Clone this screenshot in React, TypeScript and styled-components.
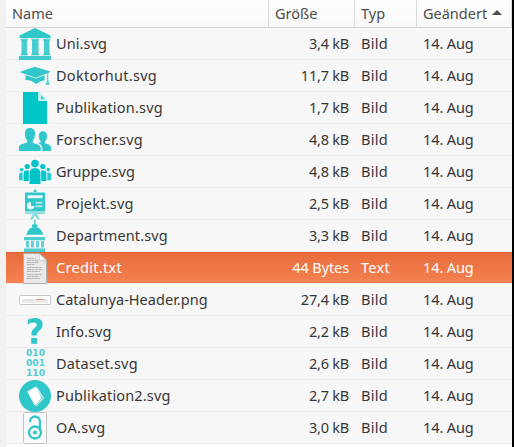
import React from "react";
import styled, { createGlobalStyle, css } from "styled-components";

const TEAL = "#2fc7c9";
const BRIGHT = "#00c5c8";

const GlobalStyle = createGlobalStyle`
  body {
    margin: 0;
    background: #000;
  }
`;

const columns = css`
  display: grid;
  grid-template-columns: 263px 86px 62px 95px;
`;

const Window = styled.div`
  box-sizing: border-box;
  width: 512px;
  height: 447px;
  overflow: hidden;
  padding-left: 6px;
  background: #f2f1f0;
  color: #3c3c3c;
  font: 14.5px/17px "Noto Sans", "Open Sans", sans-serif;
  white-space: nowrap;
`;

const Panel = styled.div`
  height: 100%;
  background: #fdfdfd;
`;

const Header = styled.div`
  ${columns}
  height: 28px;
  box-sizing: border-box;
  border-bottom: 1px solid #d5d5d5;
  background: linear-gradient(#ffffff, #f8f8f8);
  color: #4c4c4c;
`;

const HeaderCell = styled.div`
  display: flex;
  align-items: center;
  gap: 5px;
  box-sizing: border-box;
  padding: 0 0 1px 6px;
  border-right: 1px solid #dadada;
`;

const SortArrow = styled.svg`
  width: 10px;
  height: 5px;
  margin-top: -1px;
  fill: #4c4c4c;
`;

const Row = styled.div<{ $selected?: boolean }>`
  ${columns}
  height: 32px;
  box-sizing: border-box;
  border-bottom: 1px solid #ededed;
  background: ${(p) => (p.$selected ? "linear-gradient(#e86c3b, #f68151)" : "#f7f7f7")};
  box-shadow: ${(p) => (p.$selected ? "inset 0 1px #dc683b" : "none")};
  background-clip: padding-box;
  color: ${(p) => (p.$selected ? "#fff" : "#363636")};
`;

const Cell = styled.div<{ $end?: boolean }>`
  display: flex;
  align-items: center;
  justify-content: ${(p) => (p.$end ? "flex-end" : "flex-start")};
  height: 32px;
  padding: ${(p) => (p.$end ? "0 6px 0 0" : "0 0 0 6px")};
  box-sizing: border-box;
`;

const NameCell = styled(Cell)`
  padding-left: 13px;
  gap: 5px;
`;

const Label = styled.span<{ $track?: number }>`
  padding-bottom: 2px;
  letter-spacing: ${(p) => p.$track ?? 0}px;
`;

const Icon = styled.svg`
  display: block;
  flex: none;
  width: 32px;
  height: 32px;
`;

const Glyphs = styled.text`
  font-family: "DejaVu Sans", sans-serif;
  font-weight: bold;
  text-anchor: middle;
`;

const UniIcon = () => (
  <Icon viewBox="0 0 32 32" fill={TEAL}>
    <path d="M16 0 31.5 7.500V10H.5V7.500z" />
    <path d="M2.500 11.500h5.500V27H2.500zM13 11.500h6.500V27H13zM25 11.500h5.500V27H25z" opacity=".88" />
    <path d="M1.500 10.500h7.500v1.900H1.500zM12 10.500h8.500v1.900H12zM24 10.500h7.500v1.900H24zM1.500 25.500h7.500v1.900H1.500zM12 25.500h8.500v1.900H12zM24 25.500h7.500v1.900H24z" opacity=".6" />
    <path d="M0 28h32v4H0z" opacity=".9" />
  </Icon>
);

const HatIcon = () => (
  <Icon viewBox="0 0 32 32" fill={TEAL}>
    <path d="M15.800 6.800 32 11.800 16.800 17.700.5 12z" />
    <path d="M6.500 14.900 16.800 18.500 25.600 15.200v5c-3 .3-5.600 1.600-8.200 3.800-3-2.500-6.500-4.100-10.900-4.100z" />
    <path d="M29.300 12.500v7l1.300 5.500-4 .1 1.400-5.600v-6.400z" opacity=".75" />
  </Icon>
);

const DocIcon = () => (
  <Icon viewBox="0 0 32 32">
    <path d="M4 0h15.500v9H28v23H4z" fill={BRIGHT} />
    <path d="M19.500 0h2L28 7.500V9h-8.500z" fill="#d4f5f5" />
    <path d="M21.800 3v4.200h4.400z" fill="#37d0d2" />
  </Icon>
);

const ResearcherIcon = () => (
  <Icon viewBox="0 0 32 32" fill={TEAL}>
    <path d="M11 4c3.500 0 5.300 2.300 5.100 6-.1 3-1 5-2.300 6.400v2.300c3 1.300 7.800 1.800 8 5.300V27H0v-4c.2-3 5-3 8.200-4.400v-2.300C6.800 15 6 12.600 5.900 10 5.700 6.300 7.500 4 11 4z" />
    <path d="M23.800 7.200c3 0 4.400 2 4.200 5-.1 2.500-.8 4-1.900 5v2c2 .9 5.900 1.300 5.900 4.200V27h-8.700v-3c0-2.800-1.800-4-4.500-5.100l2.800-.6v-1.500c-1-1-1.700-2.400-1.800-4.600-.2-3 1.300-5 4-5z" />
  </Icon>
);

const GroupIcon = () => (
  <Icon viewBox="0 0 32 32" fill={BRIGHT}>
    <circle cx="16" cy="7.600" r="3.800" />
    <path d="M16 12.200c4 0 5.500 2 5.500 5.300V28h-11V17.500c0-3.300 1.500-5.300 5.500-5.300z" />
    <circle cx="8.200" cy="10.500" r="2.600" />
    <circle cx="23.800" cy="10.500" r="2.600" />
    <path d="M5 15.500c1.200-1.400 3-1.600 4.800-.8V25H4.600v-7.500zM27 15.500c-1.200-1.400-3-1.600-4.800-.8V25h5.200v-7.500z" />
    <circle cx="2.700" cy="13.600" r="1.900" opacity=".85" />
    <circle cx="29.300" cy="13.600" r="1.900" opacity=".85" />
    <path d="M0 18.200c.8-1.600 2-1.900 3.700-1.500v7.500H0zM32 18.200c-.8-1.600-2-1.900-3.700-1.500v7.500H32z" opacity=".85" />
  </Icon>
);

const ProjectIcon = () => (
  <Icon viewBox="0 0 32 32" fill={TEAL}>
    <path d="M14.300 4 16 .8 18 4z" />
    <path d="M6 4.500h20V23H6z" />
    <path d="M6 23h20v3H6z" opacity=".5" />
    <path d="m13.700 26-2.500 5.500h2.200L16 27.500l2.600 4h2.200L18.200 26z" opacity=".6" />
    <path d="M8.500 7.300h15v2.900h-15z" fill="#f0fbfb" />
    <path d="M12 14v4h3.500a3.800 3.800 0 1 1-3.500-4z" fill="#e8f9f9" />
    <path d="M16.500 13.800h7v2h-7zM16.500 17.300h7v2h-7z" fill="#a5e6e7" />
  </Icon>
);

const DomeIcon = () => (
  <Icon viewBox="0 0 32 32" fill={TEAL}>
    <path d="M14.800 0h2v5h-2z" opacity=".7" />
    <path d="M13 4.500h5.500V7H13z" />
    <path d="M7.300 14.800C8.500 9.500 12 7 15.800 7s7.200 2.500 8.300 7.800z" />
    <path d="M5 17h21v3.300H5zM5 28.400h21V32H5z" opacity=".85" />
    <path d="M7 21h3v6.500H7zM12 21h3v6.500h-3zM17 21h3v6.500h-3zM22 21h3v6.500h-3z" opacity=".75" />
  </Icon>
);

const TextFileIcon = () => (
  <Icon viewBox="0 0 32 32">
    <path d="M4.500 1.500h16L27.500 8v23.500h-23z" fill="#e9e9e8" stroke="#b2aeac" />
    <path d="M20.500 2v6h6z" fill="#fff" stroke="#cdcdcd" strokeWidth=".7" />
    <path d="M20.500 8h6v3z" fill="#d5d5d5" />
    <path
      d="M8 6.500h9M8 8.500h12M8 10.500h12M8 12.500h8M8 15.500h15M8 17.500h15M8 19.500h13M8 22.500h15M8 24.500h12M8 26.500h13"
      stroke="#b5b5b5"
      strokeDasharray="4 .5 2.500 .5"
    />
  </Icon>
);

const BannerIcon = () => (
  <Icon viewBox="0 0 32 32">
    <rect x=".5" y="11.500" width="31" height="9" rx="1" fill="#fff" stroke="#c4c4c4" />
    <path d="M3 15h26v4H3z" fill="#ebe9e8" />
    <path d="M8 15.500h7" stroke="#dcdcdc" />
    <path d="M17 15.500h6" stroke="#e39a78" />
    <path d="M23 15.500h3" stroke="#bbb" />
  </Icon>
);

const InfoIcon = () => (
  <Icon viewBox="0 0 32 32" fill={TEAL}>
    <path d="M8.800 3.800C11 2.500 13.500 2 16 2c4.800 0 7.600 2.500 7.600 6.600 0 3-1.600 4.800-3.800 6.700-1.800 1.600-2 2-2 4.200h-5.300c-.2-4 .7-5.300 2.800-7.200 1.700-1.500 2.400-2.200 2.400-3.500 0-1.500-1-2.300-2.800-2.300-2.100 0-4 .8-6.100 2.300z" />
    <path d="M12.200 22h5.800v5.800h-5.800z" />
  </Icon>
);

const DatasetIcon = () => (
  <Icon viewBox="0 0 32 32" fill="#50cfd1">
    <Glyphs x="16.500" y="8.300" fontSize="8.800" textLength="19" lengthAdjust="spacingAndGlyphs">010</Glyphs>
    <Glyphs x="16.500" y="17.800" fontSize="8.800" textLength="19" lengthAdjust="spacingAndGlyphs">001</Glyphs>
    <Glyphs x="16.500" y="27.500" fontSize="8.800" textLength="19" lengthAdjust="spacingAndGlyphs">110</Glyphs>
  </Icon>
);

const BookIcon = () => (
  <Icon viewBox="0 0 32 32">
    <circle cx="16" cy="16" r="16" fill={TEAL} />
    <path d="M18.500 8.500 25 18.500l-8 7.500" fill="none" stroke="#a5e6e7" />
    <path d="M18 7.500 23.500 18l-6 8" fill="none" stroke="#d5f4f4" />
    <path d="m8.200 11.500 8.800-5L22.500 18l-6.500 8z" fill="#fff" />
  </Icon>
);

const OpenAccessIcon = () => (
  <Icon viewBox="0 0 32 32" fill="none">
    <rect x="4.500" y=".5" width="23" height="31" rx="1" fill="#fcfcfc" stroke="#c2c2c2" />
    <path d="M11 10.200v-.7a5 5 0 0 1 10 0V19" stroke={TEAL} strokeWidth="2.300" />
    <circle cx="16" cy="20.500" r="6" stroke={TEAL} strokeWidth="2.300" />
    <circle cx="16" cy="20.500" r="2.100" fill={TEAL} />
  </Icon>
);

interface FileEntry {
  name: string;
  track: number;
  size: string;
  type: string;
  icon: React.FC;
  selected?: boolean;
}

const files: FileEntry[] = [
  { name: "Uni.svg", track: 0.1, size: "3,4 kB", type: "Bild", icon: UniIcon },
  { name: "Doktorhut.svg", track: 0.28, size: "11,7 kB", type: "Bild", icon: HatIcon },
  { name: "Publikation.svg", track: 0.2, size: "1,7 kB", type: "Bild", icon: DocIcon },
  { name: "Forscher.svg", track: 0.24, size: "4,8 kB", type: "Bild", icon: ResearcherIcon },
  { name: "Gruppe.svg", track: 0.03, size: "4,8 kB", type: "Bild", icon: GroupIcon },
  { name: "Projekt.svg", track: 0.22, size: "2,5 kB", type: "Bild", icon: ProjectIcon },
  { name: "Department.svg", track: 0.12, size: "3,3 kB", type: "Bild", icon: DomeIcon },
  { name: "Credit.txt", track: 0.3, size: "44 Bytes", type: "Text", icon: TextFileIcon, selected: true },
  { name: "Catalunya-Header.png", track: 0.03, size: "27,4 kB", type: "Bild", icon: BannerIcon },
  { name: "Info.svg", track: 0.1, size: "2,2 kB", type: "Bild", icon: InfoIcon },
  { name: "Dataset.svg", track: 0.2, size: "2,6 kB", type: "Bild", icon: DatasetIcon },
  { name: "Publikation2.svg", track: 0.15, size: "2,7 kB", type: "Bild", icon: BookIcon },
  { name: "OA.svg", track: 0.35, size: "3,0 kB", type: "Bild", icon: OpenAccessIcon },
];

export default function App() {
  return (
    <>
      <GlobalStyle />
      <Window>
        <Panel>
          <Header>
            <HeaderCell>Name</HeaderCell>
            <HeaderCell>Größe</HeaderCell>
            <HeaderCell>Typ</HeaderCell>
            <HeaderCell>
              Geändert
              <SortArrow viewBox="0 0 10 5">
                <path d="M5 0l5 5H0z" />
              </SortArrow>
            </HeaderCell>
          </Header>
          {files.map(({ name, track, size, type, icon: FileIcon, selected }) => (
            <Row key={name} $selected={selected}>
              <NameCell>
                <FileIcon />
                <Label $track={track}>{name}</Label>
              </NameCell>
              <Cell $end>
                <Label $track={selected ? -0.1 : -0.22}>{size}</Label>
              </Cell>
              <Cell>
                <Label $track={0.3}>{type}</Label>
              </Cell>
              <Cell>
                <Label $track={-0.1}>14. Aug</Label>
              </Cell>
            </Row>
          ))}
        </Panel>
      </Window>
    </>
  );
}
